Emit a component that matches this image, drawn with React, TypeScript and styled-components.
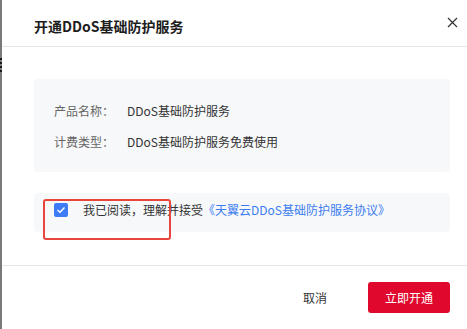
import styled, { createGlobalStyle } from 'styled-components';

const GlobalStyle = createGlobalStyle`
  html, body {
    margin: 0;
    padding: 0;
    background: #ffffff;
  }
  body {
    font-family: "Noto Sans CJK SC", "Noto Sans", sans-serif;
    color: #333;
    overflow: hidden;
  }
`;

const Page = styled.div`
  position: relative;
  display: flex;
  width: 467px;
  height: 329px;
  overflow: hidden;
`;

const Backdrop = styled.div`
  flex: 0 0 2px;
  background: #7a7a7a;
  padding-top: 58px;
`;

const BackdropMark = styled.div`
  width: 2px;
  height: 14px;
  background: repeating-linear-gradient(
    to bottom,
    #1a1a1a 0,
    #1a1a1a 2px,
    #7a7a7a 2px,
    #7a7a7a 4px
  );
`;

const Modal = styled.div`
  flex: 0 0 480px;
  display: flex;
  flex-direction: column;
  background: #fff;
`;

const Header = styled.div`
  display: flex;
  justify-content: space-between;
  height: 47px;
  box-sizing: border-box;
  padding: 0 24px 0 32px;
  border-bottom: 1px solid #e5e6eb;
`;

const Title = styled.h2`
  margin: 0;
  padding-top: 16px;
  font-size: 14px;
  line-height: 20px;
  font-weight: 700;
  color: #1d1d1d;
`;

const CloseButton = styled.button`
  margin-top: 17px;
  width: 11px;
  height: 11px;
  padding: 0;
  border: 0;
  background: none;
  color: #333;
  cursor: pointer;
  display: flex;
`;

const Body = styled.div`
  display: flex;
  flex-direction: column;
  gap: 21px;
  padding: 32px 32px 33px;
  border-bottom: 1px solid #e5e6eb;
`;

const InfoBox = styled.div`
  display: flex;
  flex-direction: column;
  gap: 11px;
  padding: 22px 20px 20px;
  background: #f7f8fa;
  border-radius: 4px;
`;

const InfoRow = styled.div`
  display: flex;
  font-size: 12px;
  line-height: 20px;
`;

const Label = styled.span`
  width: 73px;
  color: #666;
`;

const Value = styled.span`
  color: #333;
`;

const AgreeBox = styled.div`
  display: flex;
  align-items: center;
  gap: 15px;
  height: 39px;
  box-sizing: border-box;
  padding: 0 20px 5px;
  background: #f7f8fa;
  border-radius: 4px;
  font-size: 12px;
  line-height: 20px;
  color: #333;
`;

const CheckBox = styled.span`
  flex: 0 0 14px;
  width: 14px;
  height: 14px;
  border-radius: 2px;
  background: #3d7cf5;
  display: flex;
  align-items: center;
  justify-content: center;
`;

const Link = styled.a`
  color: #3c7cf2;
  text-decoration: none;
`;

const Footer = styled.div`
  display: flex;
  justify-content: flex-end;
  align-items: center;
  gap: 25px;
  padding: 16px 32px;
`;

const Button = styled.button<{ $primary?: boolean }>`
  height: 31px;
  padding: 0 ${(p) => (p.$primary ? '17px' : '16px')};
  border: 0;
  border-radius: 3px;
  font-family: inherit;
  font-size: 12px;
  background: ${(p) => (p.$primary ? '#e0082d' : 'transparent')};
  color: ${(p) => (p.$primary ? '#fff' : '#333')};
  cursor: pointer;
`;

const Highlight = styled.div`
  position: absolute;
  left: 43px;
  top: 199px;
  width: 128px;
  height: 41px;
  box-sizing: border-box;
  border: 2px solid #e8453c;
  border-radius: 3px;
  pointer-events: none;
`;

export default function App() {
  return (
    <>
      <GlobalStyle />
      <Page>
        <Backdrop>
          <BackdropMark />
        </Backdrop>
        <Modal>
          <Header>
            <Title>开通DDoS基础防护服务</Title>
            <CloseButton aria-label="关闭">
              <svg width="11" height="11" viewBox="0 0 11 11">
                <path d="M1 1L10 10M10 1L1 10" stroke="currentColor" strokeWidth="1.2" />
              </svg>
            </CloseButton>
          </Header>
          <Body>
            <InfoBox>
              <InfoRow>
                <Label>产品名称：</Label>
                <Value>DDoS基础防护服务</Value>
              </InfoRow>
              <InfoRow>
                <Label>计费类型：</Label>
                <Value>DDoS基础防护服务免费使用</Value>
              </InfoRow>
            </InfoBox>
            <AgreeBox>
              <CheckBox>
                <svg width="10" height="8" viewBox="0 0 10 8">
                  <path d="M1.5 4L4 6.3L8.5 1.5" fill="none" stroke="#fff" strokeWidth="1.4" />
                </svg>
              </CheckBox>
              <span>
                我已阅读，理解并接受<Link href="#">《天翼云DDoS基础防护服务协议》</Link>
              </span>
            </AgreeBox>
          </Body>
          <Footer>
            <Button>取消</Button>
            <Button $primary>立即开通</Button>
          </Footer>
        </Modal>
        <Highlight />
      </Page>
    </>
  );
}
